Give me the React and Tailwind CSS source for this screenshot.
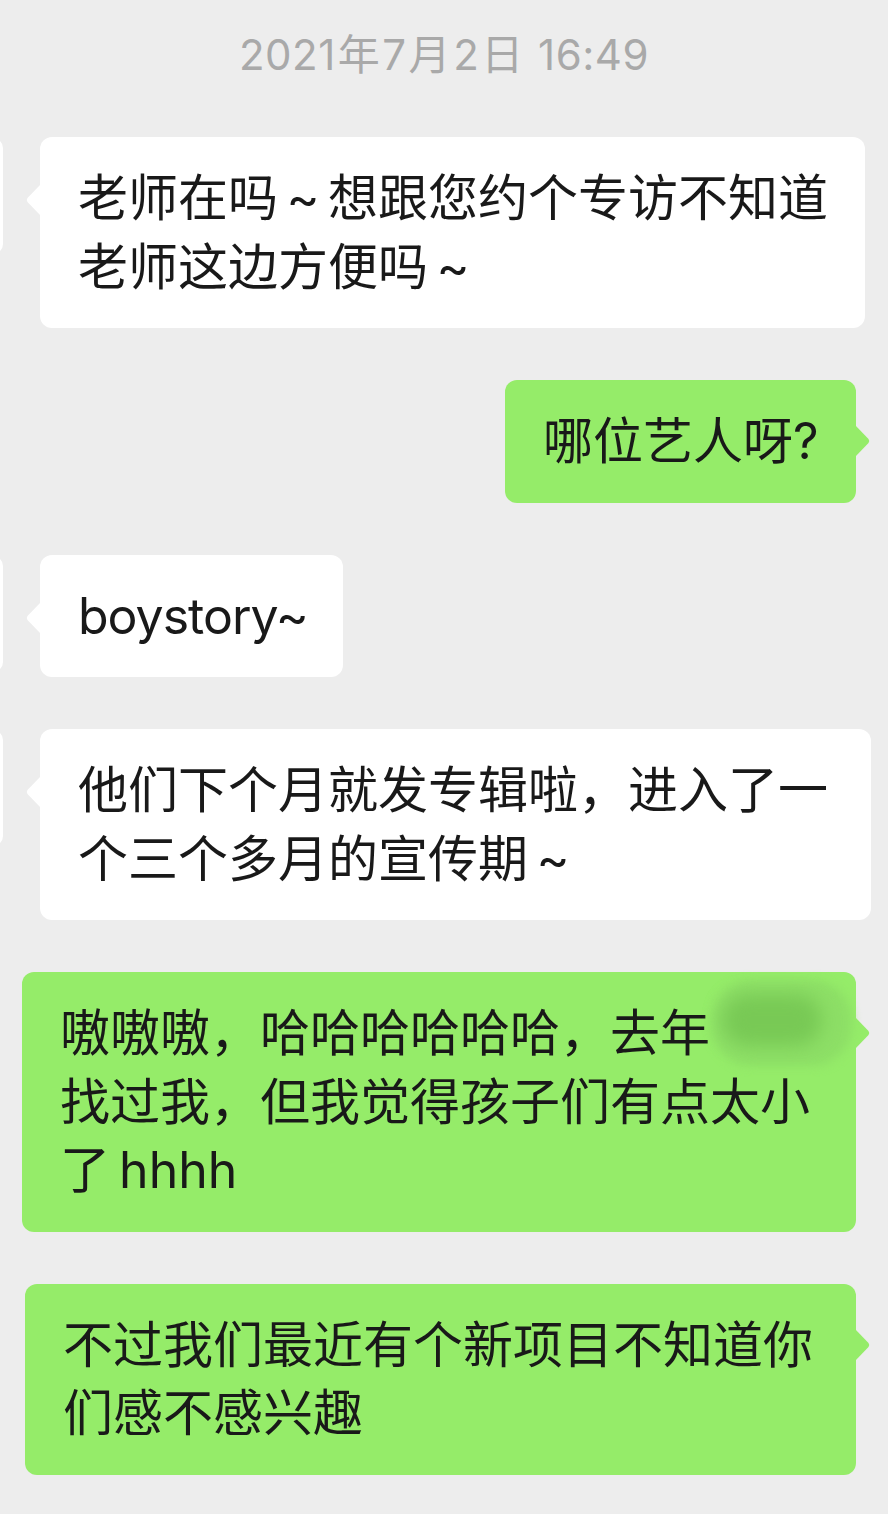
const messages = [
  { side: 'left', width: 'w-[825px]', lines: ['老师在吗～想跟您约个专访不知道', '老师这边方便吗～'] },
  { side: 'right', width: 'w-[351px]', lines: ['哪位艺人呀?'] },
  { side: 'left', width: 'w-[303px]', lines: ['boystory~'], latin: true },
  { side: 'left', width: 'w-[831px]', lines: ['他们下个月就发专辑啦，进入了一', '个三个多月的宣传期～'] },
  { side: 'right', width: 'w-[834px]', lines: ['嗷嗷嗷，哈哈哈哈哈哈，去年', '找过我，但我觉得孩子们有点太小', '了\u2009hhhh'], redacted: true },
  { side: 'right', width: 'w-[831px]', lines: ['不过我们最近有个新项目不知道你', '们感不感兴趣'] },
];

function Tail({ side, color }) {
  if (side === 'left') {
    return (
      <svg className="absolute -left-[15px] top-[47px]" width="16" height="32" viewBox="0 0 16 32">
        <path d="M16 0 L2.5 14 Q1 16 2.5 18 L16 32 Z" fill={color} />
      </svg>
    );
  }
  return (
    <svg className="absolute -right-[15px] top-[45px]" width="16" height="32" viewBox="0 0 16 32">
      <path d="M0 0 L13.5 14 Q15 16 13.5 18 L0 32 Z" fill={color} />
    </svg>
  );
}

// iOS draws the full-width tilde as a small ~ centred in a 1em slot
function Line({ text }) {
  const parts = text.split('～');
  return parts.map((part, i) => (
    <span key={i}>
      {part}
      {i < parts.length - 1 && <span className="inline-block w-[50px] text-center">~</span>}
    </span>
  ));
}

function Bubble({ msg }) {
  const isLeft = msg.side === 'left';
  return (
    <div
      className={`relative ${msg.width} rounded-[12px] pl-[38px] py-[27px] text-[50px] leading-[68.5px] text-[#191919] ${
        isLeft ? 'bg-white' : 'bg-[#95ec69]'
      } ${msg.latin ? 'tracking-[-1px]' : ''}`}
    >
      <Tail side={msg.side} color={isLeft ? '#ffffff' : '#95ec69'} />
      {msg.lines.map((line, i) => (
        <div key={i} className="whitespace-pre">
          <Line text={line} />
          {msg.redacted && i === 0 && <span className="text-transparent">某某</span>}
        </div>
      ))}
      {msg.redacted && (
        <div className="absolute left-[690px] top-[8px] w-[140px] h-[86px]">
          <div className="absolute inset-0 rounded-[40px] bg-[#8ddf66] blur-[5px]" />
          <div className="absolute left-[10px] top-[14px] w-[100px] h-[52px] rounded-[30px] bg-[#78c955] blur-[9px]" />
        </div>
      )}
    </div>
  );
}

export default function App() {
  return (
    <div className="w-[888px] h-[1514px] overflow-hidden bg-[#ededed] font-['Inter','Noto_Sans_CJK_SC',sans-serif]">
      <div className="h-[137px] flex justify-center pt-[30px]">
        <span className="text-[42px] leading-[50px] text-[#a9a9a9] tracking-[0.5px]">
          2021<span className="mx-[2px]">年</span>7<span className="mx-[2px]">月</span>2<span className="mx-[2px]">日</span> 16:49
        </span>
      </div>
      <div className="flex flex-col gap-[52px]">
        {messages.map((msg, i) =>
          msg.side === 'left' ? (
            <div key={i} className="flex items-start">
              <div className="shrink-0 w-[116px] h-[116px] -ml-[113px] mt-[1px] rounded-[10px] bg-white" />
              <div className="ml-[37px]">
                <Bubble msg={msg} />
              </div>
            </div>
          ) : (
            <div key={i} className="flex justify-end pr-[32px]">
              <Bubble msg={msg} />
            </div>
          )
        )}
      </div>
    </div>
  );
}
